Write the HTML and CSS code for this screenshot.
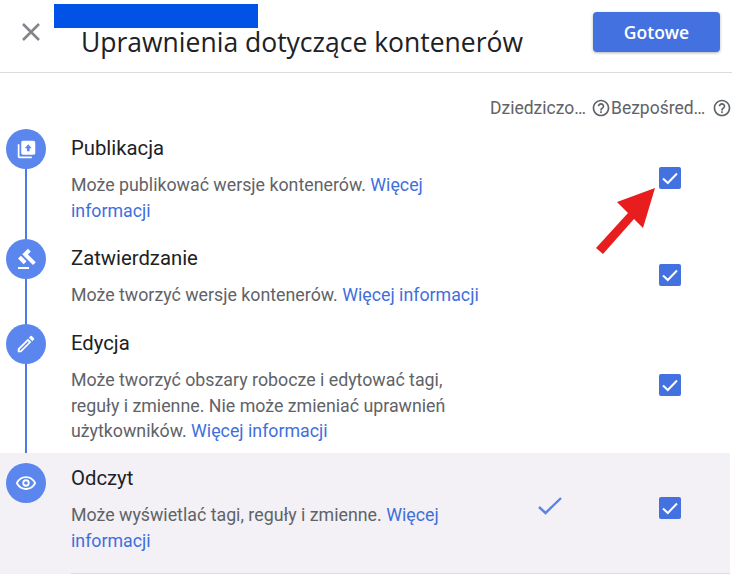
FILE: index.html
```html
<!DOCTYPE html>
<html lang="pl">
<head>
<meta charset="utf-8">
<title>Uprawnienia dotyczące kontenerów</title>
<link rel="stylesheet" href="styles.css">
</head>
<body>
<div class="redaction"></div>
<header class="topbar">
  <svg class="close" viewBox="0 0 20 20" width="20" height="20"><path d="M2 2 18 18M18 2 2 18" fill="none" stroke="#80868b" stroke-width="2.600"/></svg>
  <h1 class="title">Uprawnienia dotyczące kontenerów</h1>
  <button class="done">Gotowe</button>
</header>
<section class="colheads">
  <div class="colhead"><span class="colname">Dziedziczo…</span><svg class="help" viewBox="0 0 24 24" width="20" height="20"><path fill="#5f6368" d="M11 18h2v-2h-2v2zm1-16C6.48 2 2 6.48 2 12s4.48 10 10 10 10-4.48 10-10S17.52 2 12 2zm0 18c-4.41 0-8-3.59-8-8s3.59-8 8-8 8 3.59 8 8-3.59 8-8 8zm0-14c-2.21 0-4 1.79-4 4h2c0-1.1.9-2 2-2s2 .9 2 2c0 2-3 1.75-3 5h2c0-2.25 3-2.5 3-5 0-2.21-1.79-4-4-4z"/></svg></div>
  <div class="colhead"><span class="colname">Bezpośred…</span><svg class="help" viewBox="0 0 24 24" width="20" height="20"><path fill="#5f6368" d="M11 18h2v-2h-2v2zm1-16C6.48 2 2 6.48 2 12s4.48 10 10 10 10-4.48 10-10S17.52 2 12 2zm0 18c-4.41 0-8-3.59-8-8s3.59-8 8-8 8 3.59 8 8-3.59 8-8 8zm0-14c-2.21 0-4 1.79-4 4h2c0-1.1.9-2 2-2s2 .9 2 2c0 2-3 1.75-3 5h2c0-2.25 3-2.5 3-5 0-2.21-1.79-4-4-4z"/></svg></div>
</section>
<main class="roles">
  <article class="role role-publish">
    <div class="rail"><span class="badge"><svg viewBox="0 0 24 24" width="21" height="21"><path fill="#fff" d="M4 6H2v14c0 1.1.9 2 2 2h14v-2H4V6z"/><path fill="#fff" fill-rule="evenodd" d="M20 2H8c-1.100 0-2 .9-2 2v12c0 1.100.9 2 2 2h12c1.100 0 2-.9 2-2V4c0-1.100-.9-2-2-2zM14 6l4 4.500h-2.500V14h-3v-3.500H10L14 6z"/></svg></span></div>
    <div class="info">
      <h2 class="name">Publikacja</h2>
      <p class="desc">Może publikować wersje kontenerów. <a class="more">Więcej informacji</a></p>
    </div>
    <div class="cell"></div>
    <div class="cell"><span class="checkbox"><svg viewBox="0 0 22 22" width="22" height="22"><path d="M4 11.500 8.800 16 18 6.500" fill="none" stroke="#fff" stroke-width="2"/></svg></span></div>
  </article>
  <article class="role role-approve">
    <div class="rail"><span class="badge"><svg viewBox="0 0 24 24" width="24" height="24"><path fill="#fff" d="M4 20h11v2H4zM8.300 7.300l5.700-5.600 2.800 2.800-5.600 5.700zM4 11.500l2.900-2.800 5.600 5.600-2.800 2.900zM9.600 8.700l2.800-2.800 9.400 9.400-2.800 2.800z"/></svg></span></div>
    <div class="info">
      <h2 class="name">Zatwierdzanie</h2>
      <p class="desc">Może tworzyć wersje kontenerów. <a class="more">Więcej informacji</a></p>
    </div>
    <div class="cell"></div>
    <div class="cell"><span class="checkbox"><svg viewBox="0 0 22 22" width="22" height="22"><path d="M4 11.500 8.800 16 18 6.500" fill="none" stroke="#fff" stroke-width="2"/></svg></span></div>
  </article>
  <article class="role role-edit">
    <div class="rail"><span class="badge"><svg viewBox="0 0 24 24" width="22" height="22"><path fill="#fff" fill-rule="evenodd" d="M3 17.250V21h3.750L17.800 9.940l-3.750-3.750L3 17.250zM5 19v-1l9.050-9 1 1L6 19H5zM20.700 7.040a1 1 0 0 0 0-1.410l-2.340-2.340a1 1 0 0 0-1.410 0l-1.830 1.830 3.750 3.750 1.830-1.830z"/></svg></span></div>
    <div class="info">
      <h2 class="name">Edycja</h2>
      <p class="desc">Może tworzyć obszary robocze i edytować tagi, reguły i zmienne. Nie może zmieniać uprawnień użytkowników. <a class="more">Więcej informacji</a></p>
    </div>
    <div class="cell"></div>
    <div class="cell"><span class="checkbox"><svg viewBox="0 0 22 22" width="22" height="22"><path d="M4 11.500 8.800 16 18 6.500" fill="none" stroke="#fff" stroke-width="2"/></svg></span></div>
  </article>
  <article class="role role-read">
    <div class="rail"><span class="badge"><svg viewBox="0 0 24 24" width="22" height="22"><path fill="#fff" d="M12 4.500C7 4.500 2.730 7.610 1 12c1.730 4.390 6 7.500 11 7.500s9.270-3.110 11-7.500c-1.730-4.390-6-7.500-11-7.500zM12 17.500c-3.790 0-7.170-2.130-8.820-5.500C4.830 8.630 8.210 6.500 12 6.500s7.170 2.130 8.820 5.500c-1.650 3.370-5.030 5.500-8.820 5.500zM12 8a4 4 0 1 0 0 8 4 4 0 0 0 0-8zm0 6a2 2 0 1 1 0-4 2 2 0 0 1 0 4z"/></svg></span></div>
    <div class="info">
      <h2 class="name">Odczyt</h2>
      <p class="desc">Może wyświetlać tagi, reguły i zmienne. <a class="more">Więcej informacji</a></p>
    </div>
    <div class="cell"><svg viewBox="0 0 24 18" width="24" height="18"><path d="M1 10 7.500 16 23 1" fill="none" stroke="#5b82ec" stroke-width="2.400"/></svg></div>
    <div class="cell"><span class="checkbox"><svg viewBox="0 0 22 22" width="22" height="22"><path d="M4 11.500 8.800 16 18 6.500" fill="none" stroke="#fff" stroke-width="2"/></svg></span></div>
  </article>
</main>
<svg class="arrow" viewBox="0 0 732 587" width="732" height="587"><path fill="#e81e1e" d="M655 188 617 202 628 213 596 248 603 254 634 219 643 228z"/></svg>
</body>
</html>
```

FILE: styles.css
```css
* { box-sizing: border-box; }
html, body { margin: 0; padding: 0; }
body {
  position: relative;
  width: 732px;
  height: 587px;
  overflow: hidden;
  background: #fff;
  font-family: Roboto, "Liberation Sans", sans-serif;
  color: #202124;
}
.redaction {
  position: absolute;
  left: 54px;
  top: 4px;
  width: 204px;
  height: 24px;
  background: #0352e8;
}
.topbar {
  display: flex;
  align-items: flex-start;
  height: 73px;
  border-bottom: 1px solid #dadce0;
  padding: 0 12px 0 21px;
}
.close { margin-top: 22px; flex: none; }
.title {
  margin: 24px 0 0 40px;
  font-family: "Open Sans", Roboto, sans-serif;
  font-size: 26.500px;
  line-height: 36px;
  font-weight: 400;
  flex: 1;
  white-space: nowrap;
}
.done {
  margin-top: 12px;
  width: 127px;
  height: 40px;
  border: 0;
  border-radius: 4px;
  background: #4371e0;
  color: #fff;
  font-family: "Open Sans", Roboto, sans-serif;
  font-size: 17.500px;
  font-weight: 600;
  box-shadow: 0 1px 3px rgba(60, 64, 67, .4);
}
.colheads {
  display: flex;
  justify-content: flex-end;
  height: 50px;
  padding: 25px 0 0;
}
.colhead {
  width: 121px;
  display: flex;
  align-items: center;
  height: 20px;
  color: #5f6368;
  font-size: 17.500px;
}
.colname { width: 102px; white-space: nowrap; }
.help { flex: none; }
.roles { width: 730px; }
.role { display: flex; align-items: stretch; position: relative; }
.role-publish { height: 110px; }
.role-approve { height: 85px; }
.role-edit { height: 135px; }
.role-read { height: 121px; background: #f3f1f5; }
.rail { position: relative; width: 71px; flex: none; }
.rail::after {
  content: "";
  position: absolute;
  left: 25px;
  top: 30px;
  bottom: -30px;
  width: 2px;
  background: #4a7be8;
}
.role-read .rail::after { display: none; }
.badge {
  position: absolute;
  left: 6px;
  top: 6px;
  z-index: 1;
  width: 40px;
  height: 40px;
  border-radius: 50%;
  background: #5a86ee;
  display: flex;
  align-items: center;
  justify-content: center;
}
.role-read .badge { top: 10px; }
.info { flex: 1; min-width: 0; padding-top: 12px; }
.name {
  margin: 0;
  font-size: 20.300px;
  font-weight: 400;
  line-height: 26px;
}
.desc {
  margin: 11px 0 0;
  font-size: 17.800px;
  line-height: 25.500px;
  color: #5f6368;
}
.more { color: #3f6fdc; }
.cell {
  width: 120px;
  flex: none;
  display: flex;
  justify-content: center;
  padding-top: 44px;
}
.role-approve .cell { padding-top: 31px; }
.role-edit .cell { padding-top: 56px; }
.role-read::before {
  content: "";
  position: absolute;
  left: 71px;
  right: 0;
  bottom: 0;
  height: 1px;
  background: #dadce0;
}
.checkbox {
  display: block;
  width: 22px;
  height: 22px;
  border-radius: 2px;
  background: #4371e0;
}
.arrow { position: absolute; left: 0; top: 0; pointer-events: none; }
```
